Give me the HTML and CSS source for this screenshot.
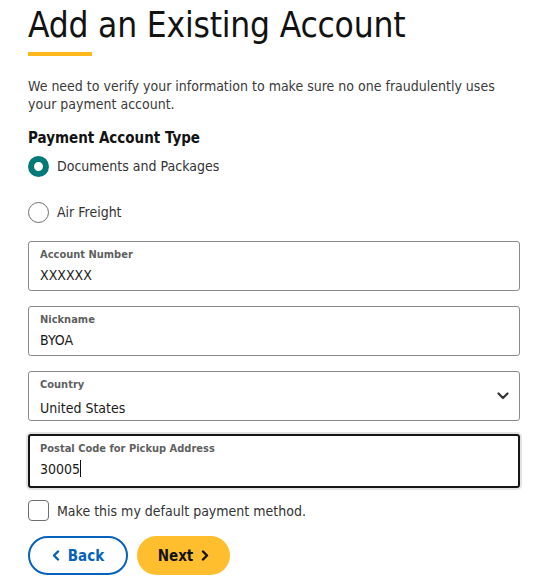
FILE: index.html
```html
<!DOCTYPE html>
<html lang="en">
<head>
<meta charset="utf-8">
<title>Add an Existing Account</title>
<link rel="stylesheet" href="styles.css">
</head>
<body>
<main class="page">
  <h1 class="title">Add an Existing Account</h1>
  <div class="title-bar"></div>
  <p class="intro">We need to verify your information to make sure no one fraudulently uses your payment account.</p>
  <div class="type-group" role="radiogroup">
    <div class="type-legend">Payment Account Type</div>
    <label class="radio-row">
      <span class="radio radio-on"></span>
      <span class="radio-text">Documents and Packages</span>
    </label>
    <label class="radio-row">
      <span class="radio"></span>
      <span class="radio-text">Air Freight</span>
    </label>
  </div>
  <div class="fields">
    <div class="field">
      <span class="field-label">Account Number</span>
      <span class="field-value">XXXXXX</span>
    </div>
    <div class="field">
      <span class="field-label">Nickname</span>
      <span class="field-value">BYOA</span>
    </div>
    <div class="field field-select">
      <span class="field-label">Country</span>
      <span class="field-value">United States</span>
      <svg class="chevron" width="12" height="8" viewBox="0 0 12 8"><path d="M1.5 1.5 L6 6 L10.5 1.5" fill="none" stroke="#333" stroke-width="2.2" stroke-linecap="round" stroke-linejoin="round"/></svg>
    </div>
    <div class="field field-focus">
      <span class="field-label">Postal Code for Pickup Address</span>
      <span class="field-value">30005<span class="caret"></span></span>
    </div>
  </div>
  <label class="check-row">
    <span class="checkbox"></span>
    <span class="check-text">Make this my default payment method.</span>
  </label>
  <div class="actions">
    <button class="btn btn-back"><svg width="8" height="11" viewBox="0 0 8 11"><path d="M6 1.5 L2 5.5 L6 9.5" fill="none" stroke="#0662bb" stroke-width="2.4" stroke-linecap="round" stroke-linejoin="round"/></svg>Back</button>
    <button class="btn btn-next">Next<svg width="8" height="11" viewBox="0 0 8 11"><path d="M2 1.5 L6 5.5 L2 9.5" fill="none" stroke="#121212" stroke-width="2.4" stroke-linecap="round" stroke-linejoin="round"/></svg></button>
  </div>
</main>
</body>
</html>
```
FILE: styles.css
```css
html, body {
  margin: 0;
  padding: 0;
  background: #ffffff;
}
body {
  font-family: "DejaVu Sans Condensed", "DejaVu Sans", sans-serif;
  font-stretch: condensed;
  color: #242424;
}
.page {
  width: 492px;
  padding: 0 0 0 28px;
}
.title {
  margin: 0;
  padding-top: 4px;
  font-size: 35px;
  line-height: 42px;
  font-weight: normal;
  color: #121212;
  letter-spacing: -0.2px;
}
.title-bar {
  width: 64px;
  height: 4px;
  background: #ffb81c;
  margin-top: 6px;
}
.intro {
  margin: 21px 0 0;
  font-size: 14px;
  line-height: 18px;
  color: #3a3a3a;
}
.type-group {
  margin-top: 15px;
}
.type-legend {
  font-size: 15px;
  line-height: 20px;
  font-weight: bold;
  color: #121212;
}
.radio-row {
  display: flex;
  align-items: center;
  gap: 8px;
  height: 22px;
  margin-top: 7px;
}
.radio-row + .radio-row {
  margin-top: 24px;
}
.radio {
  box-sizing: border-box;
  width: 21px;
  height: 21px;
  border-radius: 50%;
  border: 1.5px solid #6e6e6e;
  background: #fff;
}
.radio-on {
  border: 6.5px solid #007a76;
  background: #fff;
}
.radio-text {
  font-size: 14px;
  color: #333333;
}
.fields {
  display: flex;
  flex-direction: column;
  gap: 15px;
  margin-top: 18px;
}
.field {
  position: relative;
  box-sizing: border-box;
  height: 50px;
  border: 1px solid #8a8a8a;
  border-radius: 3px;
  padding: 6px 11px 0;
  display: flex;
  flex-direction: column;
}
.field-label {
  font-size: 11px;
  line-height: 14px;
  font-weight: bold;
  color: #5f5f5f;
}
.field-value {
  margin-top: 4px;
  font-size: 14px;
  line-height: 18px;
  color: #1a1a1a;
}
.field-select .field-value {
  margin-top: 7px;
}
.chevron {
  position: absolute;
  right: 10px;
  top: 20px;
}
.field-focus {
  height: 54px;
  margin-top: -2px;
  border: 2.5px solid #161616;
  box-shadow: 0 0 0 2px #e3e3e3;
  padding-left: 10px;
  padding-top: 6px;
}
.caret {
  display: inline-block;
  width: 1px;
  height: 17px;
  background: #111;
  vertical-align: -3px;
}
.check-row {
  display: flex;
  align-items: center;
  gap: 8px;
  margin-top: 12px;
}
.checkbox {
  box-sizing: border-box;
  width: 21px;
  height: 21px;
  border: 1.5px solid #6e6e6e;
  border-radius: 4px;
}
.check-text {
  font-size: 14px;
  color: #333333;
}
.actions {
  display: flex;
  gap: 9px;
  margin-top: 15px;
}
.btn {
  box-sizing: border-box;
  height: 39px;
  border-radius: 20px;
  font-family: "DejaVu Sans Condensed", "DejaVu Sans", sans-serif;
  font-stretch: condensed;
  font-size: 15px;
  font-weight: bold;
  display: flex;
  align-items: center;
  justify-content: center;
  gap: 8px;
  padding: 0;
}
.btn-back {
  width: 100px;
  background: #fff;
  border: 2px solid #0662bb;
  color: #0662bb;
}
.btn-next {
  width: 93px;
  background: #ffbe2e;
  border: 0;
  color: #121212;
}
```
